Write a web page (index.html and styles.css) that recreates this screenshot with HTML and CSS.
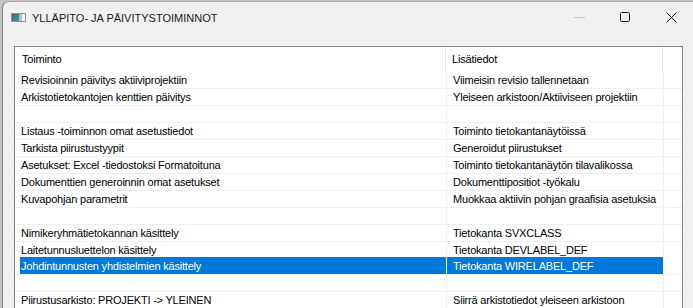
FILE: index.html
```html
<!DOCTYPE html>
<html lang="fi">
<head>
  <meta charset="UTF-8">
  <title>Ylläpito- ja päivitystoiminnot</title>
  <link rel="stylesheet" href="styles.css">
</head>
<body>

  <div class="window">
    <!-- Title bar -->
    <div class="titlebar">
      <svg class="app-icon" width="15" height="9" viewBox="0 0 15 9">
        <defs>
          <linearGradient id="g" x1="0" y1="0" x2="1" y2="1">
            <stop offset="0" stop-color="#2f6d8f"/>
            <stop offset="1" stop-color="#4f9380"/>
          </linearGradient>
        </defs>
        <rect x="0" y="0" width="15" height="9" fill="#8f959a"/>
        <rect x="1" y="1" width="7" height="7" fill="url(#g)"/>
        <rect x="8" y="1" width="3" height="7" fill="#a9c5cf"/>
        <rect x="11" y="1" width="3" height="7" fill="#f4f4f4"/>
      </svg>
      <span class="title">YLLÄPITO- JA PÄIVITYSTOIMINNOT</span>
      <div class="caption-buttons">
        <div class="cbtn">
          <svg width="11" height="1" viewBox="0 0 11 1"><rect width="11" height="1" fill="#c6c6c6"/></svg>
        </div>
        <div class="cbtn">
          <svg width="10" height="10" viewBox="0 0 10 10"><rect x="0.5" y="0.5" width="9" height="9" rx="1" fill="none" stroke="#1b1b1b"/></svg>
        </div>
        <div class="cbtn">
          <svg width="11" height="11" viewBox="0 0 11 11"><path d="M0.5 0.5 L10.5 10.5 M10.5 0.5 L0.5 10.5" stroke="#1b1b1b" stroke-width="1"/></svg>
        </div>
      </div>
    </div>

    <!-- List -->
    <div class="content">
      <div class="listview">
        <div class="lv-head">
          <div class="c1">Toiminto</div>
          <div class="c2">Lisätiedot</div>
          <div class="c3"></div>
        </div>

        <div class="lv-row first">
          <div class="c1"><span>Revisioinnin päivitys aktiiviprojektiin</span></div>
          <div class="c2">Viimeisin revisio tallennetaan</div>
          <div class="c3"></div>
        </div>
        <div class="lv-row">
          <div class="c1"><span>Arkistotietokantojen kenttien päivitys</span></div>
          <div class="c2">Yleiseen arkistoon/Aktiiviseen projektiin</div>
          <div class="c3"></div>
        </div>
        <div class="lv-row">
          <div class="c1"><span></span></div>
          <div class="c2"></div>
          <div class="c3"></div>
        </div>
        <div class="lv-row">
          <div class="c1"><span>Listaus -toiminnon omat asetustiedot</span></div>
          <div class="c2">Toiminto tietokantanäytöissä</div>
          <div class="c3"></div>
        </div>
        <div class="lv-row">
          <div class="c1"><span>Tarkista piirustustyypit</span></div>
          <div class="c2">Generoidut piirustukset</div>
          <div class="c3"></div>
        </div>
        <div class="lv-row">
          <div class="c1"><span>Asetukset: Excel -tiedostoksi Formatoituna</span></div>
          <div class="c2">Toiminto tietokantanäytön tilavalikossa</div>
          <div class="c3"></div>
        </div>
        <div class="lv-row">
          <div class="c1"><span>Dokumenttien generoinnin omat asetukset</span></div>
          <div class="c2">Dokumenttipositiot -työkalu</div>
          <div class="c3"></div>
        </div>
        <div class="lv-row">
          <div class="c1"><span>Kuvapohjan parametrit</span></div>
          <div class="c2">Muokkaa aktiivin pohjan graafisia asetuksia</div>
          <div class="c3"></div>
        </div>
        <div class="lv-row">
          <div class="c1"><span></span></div>
          <div class="c2"></div>
          <div class="c3"></div>
        </div>
        <div class="lv-row">
          <div class="c1"><span>Nimikeryhmätietokannan käsittely</span></div>
          <div class="c2">Tietokanta SVXCLASS</div>
          <div class="c3"></div>
        </div>
        <div class="lv-row">
          <div class="c1"><span>Laitetunnusluettelon käsittely</span></div>
          <div class="c2">Tietokanta DEVLABEL_DEF</div>
          <div class="c3"></div>
        </div>
        <div class="lv-row selected">
          <div class="c1"><span>Johdintunnusten yhdistelmien käsittely</span></div>
          <div class="c2">Tietokanta WIRELABEL_DEF</div>
          <div class="c3"></div>
        </div>
        <div class="lv-row">
          <div class="c1"><span></span></div>
          <div class="c2"></div>
          <div class="c3"></div>
        </div>
        <div class="lv-row">
          <div class="c1"><span>Piirustusarkisto: PROJEKTI -&gt; YLEINEN</span></div>
          <div class="c2">Siirrä arkistotiedot yleiseen arkistoon</div>
          <div class="c3"></div>
        </div>
      </div>
    </div>
  </div>

</body>
</html>
```

FILE: styles.css
```css
html, body {
  margin: 0;
  height: 308px;
  overflow: hidden;
}

body {
  background: #c4c4c4;
  font-family: 'Liberation Sans', Arial, sans-serif;
  color: #000;
}

.window {
  margin: 1px 0 0 2px;
  width: 691px;
  height: 320px;
  background: #f0f0f0;
  border-left: 1px solid #7c7c7c;
  border-top: 1px solid #a8a8a8;
  border-top-left-radius: 7px;
}

/* Title bar */
.titlebar {
  display: flex;
  align-items: center;
  height: 31px;
  padding-left: 8px;
}

.app-icon {
  display: block;
  margin-top: -1px;
}

.title {
  margin-left: 6px;
  font-size: 11px;
  color: #1a1a1a;
}

.caption-buttons {
  display: flex;
  margin-left: auto;
  height: 31px;
}

.cbtn {
  width: 46px;
  display: flex;
  align-items: center;
  justify-content: center;
  margin-top: -1px;
}

.cbtn svg {
  display: block;
}

/* List view */
.content {
  padding: 13px 0 0 11px;
}

.listview {
  width: 667px;
  background: #fff;
  border: 1px solid #828790;
  font-size: 11px;
  letter-spacing: -0.2px;
}

.lv-head {
  display: flex;
  height: 24px;
  align-items: stretch;
  line-height: 25px;
}

.lv-head .c1 {
  width: 423px;
  padding-left: 7px;
  border-right: 1px solid #e5e5e5;
}

.lv-head .c2 {
  width: 210px;
  padding-left: 6px;
  border-right: 1px solid #e5e5e5;
}

.lv-head .c3 {
  flex: 1;
}

.lv-row {
  display: flex;
  height: 16px;
  line-height: 16px;
  border-top: 1px solid #f0f0f0;
  white-space: nowrap;
}

.lv-row.first {
  border-top-color: #fff;
}

.lv-row .c1 {
  width: 426px;
  padding-left: 5px;
  border-right: 1px solid #f0f0f0;
  display: flex;
}

.lv-row .c1 span {
  flex: 1;
  padding-left: 1px;
}

.lv-row .c2 {
  width: 210px;
  padding-left: 6px;
  border-right: 1px solid #f0f0f0;
}

.lv-row .c3 {
  flex: 1;
}

.lv-row.selected {
  height: 17px;
  margin-top: -1px;
  line-height: 18px;
  border-top: 0;
  color: #fff;
}

.lv-row.selected .c1 {
  border-right-color: #fff;
}

.lv-row.selected .c1 span,
.lv-row.selected .c2 {
  background: #0078d7;
}
```
